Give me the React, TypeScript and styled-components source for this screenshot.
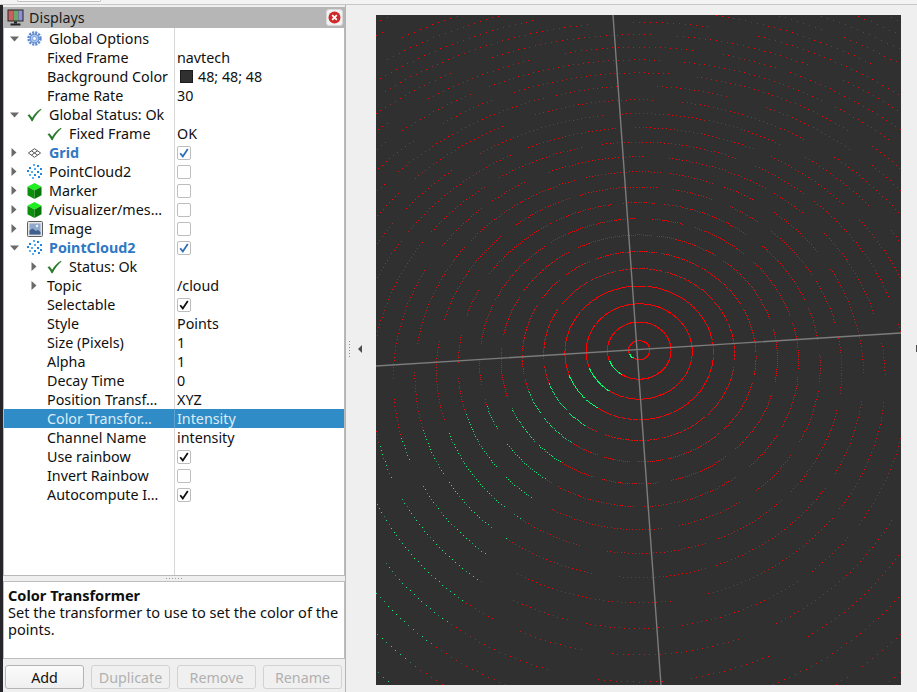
import React from "react";
import styled, { createGlobalStyle } from "styled-components";

const GlobalStyle = createGlobalStyle`
  html, body {
    margin: 0;
    padding: 0;
    background: #efefef;
    overflow: hidden;
  }
  * { box-sizing: border-box; }
`;

const Page = styled.div`
  width: 917px;
  height: 692px;
  display: flex;
  flex-direction: column;
  overflow: hidden;
  background: #efefef;
  color: #101010;
  font-family: "Noto Sans", "Open Sans", sans-serif;
  font-size: 14.3px;
`;

const TopStrip = styled.div`
  height: 5px;
  flex: none;
  background: #f3f3f3;
  border-bottom: 1px solid #c6c6c6;
  padding-left: 17px;
`;

const TopButton = styled.div`
  width: 84px;
  height: 2px;
  background: #fafafa;
  border: 1px solid #c0c0c0;
  border-top: none;
  border-radius: 0 0 3px 3px;
`;

const Main = styled.div`
  flex: 1;
  display: flex;
  min-height: 0;
`;

const LeftEdge = styled.div`
  width: 3px;
  flex: none;
  background: #26262a;
`;

const Sidebar = styled.div`
  width: 342px;
  flex: none;
  display: flex;
  flex-direction: column;
  padding-top: 2px;
`;

const TitleBar = styled.div`
  height: 21px;
  flex: none;
  display: flex;
  align-items: center;
  background: #b6b6b6;
  padding: 0 2px 0 4px;
`;

const TitleText = styled.span`
  margin-left: 5px;
  flex: 1;
  color: #1a1a1a;
`;

const CloseButton = styled.div`
  width: 17px;
  height: 17px;
  background: #f2f2f2;
  border: 1px solid #d8d8d8;
  border-radius: 3px;
  display: flex;
  align-items: center;
  justify-content: center;
`;

const Tree = styled.div`
  flex: 1;
  min-height: 0;
  border: 1px solid #b9b9b9;
  border-top: none;
  padding-top: 1px;
  background: linear-gradient(#d6d6d6, #d6d6d6) 170px 0 / 1px 100% no-repeat, #ffffff;
`;

const Row = styled.div<{ $selected?: boolean }>`
  height: 19px;
  display: flex;
  align-items: center;
  background: ${(p) => (p.$selected ? "#308cc6" : "transparent")};
  color: ${(p) => (p.$selected ? "#dcebf6" : "#101010")};
`;

const NameCell = styled.div<{ $depth: number; $selected?: boolean }>`
  width: 171px;
  height: 100%;
  flex: none;
  display: flex;
  align-items: center;
  padding-left: ${(p) => p.$depth * 20}px;
  border-right: 1px solid ${(p) => (p.$selected ? "#5aa3d2" : "transparent")};
  white-space: nowrap;
  overflow: hidden;
`;

const ArrowSlot = styled.div`
  width: 20px;
  flex: none;
  display: flex;
  justify-content: center;
`;

const IconSlot = styled.div`
  width: 21px;
  flex: none;
  display: flex;
  justify-content: center;
  align-items: center;
`;

const NameText = styled.span<{ $bold?: boolean; $plain?: boolean }>`
  margin-left: ${(p) => (p.$plain ? 3 : 4)}px;
  font-weight: ${(p) => (p.$bold ? 700 : 400)};
  color: ${(p) => (p.$bold ? "#2f78c4" : "inherit")};
`;

const ValueCell = styled.div`
  flex: 1;
  display: flex;
  align-items: center;
  padding-left: 2px;
  white-space: nowrap;
`;

const Swatch = styled.span`
  width: 13px;
  height: 13px;
  margin: 0 5px 0 3px;
  background: #303030;
  border: 1px solid #1c1c1c;
`;

const CheckBox = styled.span`
  width: 14px;
  height: 14px;
  background: #fff;
  border: 1px solid #bdbdbd;
  border-radius: 2px;
  display: flex;
  align-items: center;
  justify-content: center;
`;

const SplitGrip = styled.div`
  height: 5px;
  flex: none;
  display: flex;
  justify-content: center;
  align-items: center;
  gap: 2px;
`;

const GripDot = styled.span`
  width: 1px;
  height: 1px;
  background: #9a9a9a;
`;

const Description = styled.div`
  height: 78px;
  flex: none;
  background: #fff;
  border: 1px solid #bdbdbd;
  padding: 5px 4px;
  font-size: 14.55px;
  line-height: 17px;
`;

const DescTitle = styled.div`
  font-weight: 700;
`;

const ButtonRow = styled.div`
  display: flex;
  gap: 7px;
  padding: 6px 2px 3px 2px;
`;

const ActionButton = styled.button<{ $disabled?: boolean }>`
  width: 79px;
  height: 24px;
  padding: 0;
  font: inherit;
  border-radius: 3px;
  border: 1px solid ${(p) => (p.$disabled ? "#d2d2d2" : "#b4b4b4")};
  color: ${(p) => (p.$disabled ? "#b0b0b0" : "#101010")};
  background: ${(p) =>
    p.$disabled ? "#f0f0f0" : "linear-gradient(#fbfbfb, #efefef)"};
`;

const Handle = styled.div`
  width: 31px;
  flex: none;
  display: flex;
  align-items: center;
  gap: 8px;
  padding-left: 3px;
  border-left: 1px solid #b4b4b4;
`;

const HandleDots = styled.div`
  display: flex;
  flex-direction: column;
  gap: 2px;
`;

const HandleDot = styled.span`
  width: 1px;
  height: 1px;
  background: #8d8d8d;
`;

const LeftArrow = styled.span`
  width: 0;
  height: 0;
  border-style: solid;
  border-width: 4px 4px 4px 0;
  border-color: transparent #4c4c4c transparent transparent;
`;

const ViewportWrap = styled.div`
  width: 525px;
  height: 670px;
  flex: none;
  margin-top: 10px;
  background: #303030;
`;

const RightGap = styled.div`
  flex: 1;
  display: flex;
  justify-content: flex-end;
  align-items: center;
`;

const RightMark = styled.span`
  width: 1px;
  height: 7px;
  background: #4c4c4c;
`;

// tree arrows and item icons

const TreeArrow = ({ open }: { open: boolean }) =>
  open ? (
    <svg width="9" height="6" viewBox="0 0 9 6">
      <path d="M0 .5h9L4.5 5.5z" fill="#6a6a6a" />
    </svg>
  ) : (
    <svg width="6" height="9" viewBox="0 0 6 9">
      <path d="M.5 0v9l5-4.5z" fill="#6a6a6a" />
    </svg>
  );

const CheckIcon = () => (
  <svg width="15" height="14" viewBox="0 0 15 14">
    <path d="M0.5 7.2 2.4 6.200 5.200 9.800C7.400 6 10 3 14 .8l.5.7C10.800 4.600 8 8.600 5.600 13.200H4.600C3.400 10.800 2 9 .5 7.200z" fill="#2c7a2c" />
  </svg>
);

const GearIcon = () => (
  <svg width="15" height="15" viewBox="0 0 15 15">
    <circle cx="7.5" cy="7.5" r="6" fill="none" stroke="#5c88d0" strokeWidth="2.4" strokeDasharray="2.1 1.04" />
    <circle cx="7.5" cy="7.5" r="4.4" fill="#a9c5ee" stroke="#4f7cc8" strokeWidth="1" />
    <circle cx="7.5" cy="7.5" r="2" fill="#f4f8fe" stroke="#6f97d8" strokeWidth=".8" />
  </svg>
);

const GridIcon = () => (
  <svg width="15" height="10" viewBox="0 0 15 10">
    <path d="M7.5.7 13.6 5 7.5 9.3 1.4 5zM4.5 2.8l6 4.3M10.5 2.8l-6 4.3" fill="none" stroke="#5a5a5a" strokeWidth="1" />
  </svg>
);

const CLOUD_DOTS = [
  [6, 0], [10, 1], [2, 3], [7, 4], [13, 4], [0, 6], [4, 7], [10, 7],
  [13, 9], [2, 10], [7, 10], [11, 12], [5, 13],
];

const CloudIcon = () => (
  <svg width="15" height="15" viewBox="0 0 15 15">
    {CLOUD_DOTS.map(([x, y], i) => (
      <rect key={i} x={x} y={y} width="2" height="2" fill={i % 3 === 0 ? "#5ab0ee" : "#1f86e2"} />
    ))}
  </svg>
);

const CubeIcon = () => (
  <svg width="15" height="16" viewBox="0 0 15 16">
    <path d="M7.5 0 14.5 3.8 7.5 7.6.5 3.8z" fill="#1df01d" />
    <path d="M.5 3.8 7.5 7.6V16L.5 12.2z" fill="#0a8f0a" />
    <path d="M14.5 3.8 7.5 7.6V16l7-3.8z" fill="#067406" />
  </svg>
);

const ImageIcon = () => (
  <svg width="16" height="16" viewBox="0 0 16 16">
    <rect x=".5" y=".5" width="15" height="15" rx="1" fill="#e6e6e6" stroke="#5f5f5f" />
    <rect x="2.5" y="2.5" width="11" height="11" fill="#8fa8cc" />
    <path d="M2.5 13.5V9.5l3-2 3.5 2.500 2-1 2.500 2v2.500z" fill="#3f5f8c" />
    <circle cx="10" cy="5" r="1.300" fill="#e8eef8" />
  </svg>
);

const MonitorIcon = () => (
  <svg width="17" height="17" viewBox="0 0 17 17">
    <rect x=".5" y=".5" width="16" height="12" fill="#222" />
    <rect x="1.500" y="1.500" width="5" height="10" fill="#c9605f" />
    <rect x="6.500" y="1.500" width="5" height="10" fill="#6ba86b" />
    <rect x="11.500" y="1.500" width="4" height="10" fill="#8f8fd8" />
    <rect x="7" y="12.500" width="3" height="2" fill="#222" />
    <rect x="3.500" y="14.500" width="10" height="2" fill="#222" />
  </svg>
);

const CloseIcon = () => (
  <svg width="13" height="13" viewBox="0 0 13 13">
    <circle cx="6.500" cy="6.500" r="6" fill="#cf2a2a" />
    <path d="M4.200 4.200l4.600 4.600M8.800 4.200l-4.600 4.600" stroke="#fff" strokeWidth="1.800" />
  </svg>
);

const BoxTick = ({ color }: { color: string }) => (
  <svg width="10" height="10" viewBox="0 0 10 10">
    <path d="M1.200 5.200 3.800 8.400 8.800 1" fill="none" stroke={color} strokeWidth="1.800" />
  </svg>
);

type IconKind = "gear" | "check" | "grid" | "cloud" | "cube" | "image";

const ICONS: Record<IconKind, React.ReactNode> = {
  gear: <GearIcon />,
  check: <CheckIcon />,
  grid: <GridIcon />,
  cloud: <CloudIcon />,
  cube: <CubeIcon />,
  image: <ImageIcon />,
};

interface TreeRow {
  name: string;
  depth?: number;
  arrow?: "open" | "closed";
  icon?: IconKind;
  bold?: boolean;
  selected?: boolean;
  value?: string;
  swatch?: boolean;
  box?: "off" | "on" | "blue";
}

const ROWS: TreeRow[] = [
  { name: "Global Options", arrow: "open", icon: "gear" },
  { name: "Fixed Frame", depth: 1, value: "navtech" },
  { name: "Background Color", depth: 1, value: "48; 48; 48", swatch: true },
  { name: "Frame Rate", depth: 1, value: "30" },
  { name: "Global Status: Ok", arrow: "open", icon: "check" },
  { name: "Fixed Frame", depth: 1, icon: "check", value: "OK" },
  { name: "Grid", arrow: "closed", icon: "grid", bold: true, box: "blue" },
  { name: "PointCloud2", arrow: "closed", icon: "cloud", box: "off" },
  { name: "Marker", arrow: "closed", icon: "cube", box: "off" },
  { name: "/visualizer/mes…", arrow: "closed", icon: "cube", box: "off" },
  { name: "Image", arrow: "closed", icon: "image", box: "off" },
  { name: "PointCloud2", arrow: "open", icon: "cloud", bold: true, box: "blue" },
  { name: "Status: Ok", depth: 1, arrow: "closed", icon: "check" },
  { name: "Topic", depth: 1, arrow: "closed", value: "/cloud" },
  { name: "Selectable", depth: 1, box: "on" },
  { name: "Style", depth: 1, value: "Points" },
  { name: "Size (Pixels)", depth: 1, value: "1" },
  { name: "Alpha", depth: 1, value: "1" },
  { name: "Decay Time", depth: 1, value: "0" },
  { name: "Position Transf…", depth: 1, value: "XYZ" },
  { name: "Color Transfor…", depth: 1, value: "Intensity", selected: true },
  { name: "Channel Name", depth: 1, value: "intensity" },
  { name: "Use rainbow", depth: 1, box: "on" },
  { name: "Invert Rainbow", depth: 1, box: "off" },
  { name: "Autocompute I…", depth: 1, box: "on" },
];

// radar point cloud: rings on the ground plane, seen in perspective

function makeRandom(seed: number) {
  let s = seed;
  return () => {
    s = (s + 0x6d2b79f5) | 0;
    let t = Math.imul(s ^ (s >>> 15), 1 | s);
    t = (t + Math.imul(t ^ (t >>> 7), 61 | t)) ^ t;
    return ((t ^ (t >>> 14)) >>> 0) / 4294967296;
  };
}

const CX = 638.7;
const CY = 349.6;
const REDS = ["#ff0000", "#e01010", "#bc1c1c", "#963030"];
const GREENS = ["#00ff70", "#14e088", "#22b078", "#2c8a60"];
const STEPS = 400;

function buildCloud() {
  const rnd = makeRandom(20240);
  const paths: Record<string, string> = {};
  for (let k = 0; k < 42; k++) {
    const r = k + 0.5;
    let i = Math.floor(rnd() * 20);
    let run = 0;
    let on = true;
    for (let n = 0; n < STEPS; n++) {
      if (run <= 0) {
        on = !on;
        if (on) {
          run = (k < 4 ? 70 : 10) + rnd() * (k < 4 ? 120 : 30);
        } else {
          run = k < 4 ? 1 + rnd() : 1 + rnd() * Math.min(7, 2 + k / 2);
        }
      }
      run--;
      i++;
      if (!on) continue;
      const a = (i / STEPS) * Math.PI * 2;
      const X = r * Math.cos(a);
      const Y = r * Math.sin(a);
      const d = 0.0525 - 0.000608 * Y;
      const px = Math.round(CX + (X * 1.113) / d);
      const py = Math.round(CY + Y / d);
      if (px < 376 || px >= 901 || py < 15 || py >= 685) continue;
      const dx = px - CX;
      const dy = py - CY;
      const ratio = dy / Math.max(0.01, -dx);
      const green = dx < 0 && dy > 0 && ratio > 0.36 && ratio < 1.42;
      const roll = rnd();
      const level = k < 4 ? 0 : roll < 0.4 ? 0 : roll < 0.7 ? 1 : roll < 0.9 ? 2 : 3;
      const fill = (green ? GREENS : REDS)[level];
      paths[fill] = (paths[fill] || "") + `M${px} ${py}h1v1h-1z`;
    }
  }
  return paths;
}

const CLOUD = buildCloud();

const PointCloudView = () => (
  <svg width="525" height="670" viewBox="376 15 525 670" style={{ display: "block" }}>
    {Object.keys(CLOUD).map((fill) => (
      <path key={fill} d={CLOUD[fill]} fill={fill} shapeRendering="crispEdges" />
    ))}
    <path d="M613 15 661 685M376 366 901 333" stroke="#7c7c7c" strokeWidth="1.400" fill="none" />
  </svg>
);

const TreeLine = ({ row }: { row: TreeRow }) => {
  const { name, depth = 0, arrow, icon, bold, selected, value, swatch, box } = row;
  return (
    <Row $selected={selected}>
      <NameCell $depth={depth} $selected={selected}>
        <ArrowSlot>{arrow && <TreeArrow open={arrow === "open"} />}</ArrowSlot>
        {icon && <IconSlot>{ICONS[icon]}</IconSlot>}
        <NameText $bold={bold} $plain={!icon}>{name}</NameText>
      </NameCell>
      <ValueCell>
        {swatch && <Swatch />}
        {value}
        {box && (
          <CheckBox>
            {box !== "off" && <BoxTick color={box === "blue" ? "#2f6fb4" : "#111"} />}
          </CheckBox>
        )}
      </ValueCell>
    </Row>
  );
};

export default function App() {
  return (
    <Page>
      <GlobalStyle />
      <TopStrip>
        <TopButton />
      </TopStrip>
      <Main>
        <LeftEdge />
        <Sidebar>
          <TitleBar>
            <MonitorIcon />
            <TitleText>Displays</TitleText>
            <CloseButton>
              <CloseIcon />
            </CloseButton>
          </TitleBar>
          <Tree>
            {ROWS.map((row, i) => (
              <TreeLine key={i} row={row} />
            ))}
          </Tree>
          <SplitGrip>
            {[0, 1, 2, 3, 4, 5].map((i) => (
              <GripDot key={i} />
            ))}
          </SplitGrip>
          <Description>
            <DescTitle>Color Transformer</DescTitle>
            <div>Set the transformer to use to set the color of the points.</div>
          </Description>
          <ButtonRow>
            <ActionButton>Add</ActionButton>
            <ActionButton $disabled>Duplicate</ActionButton>
            <ActionButton $disabled>Remove</ActionButton>
            <ActionButton $disabled>Rename</ActionButton>
          </ButtonRow>
        </Sidebar>
        <Handle>
          <HandleDots>
            {[0, 1, 2, 3, 4, 5].map((i) => (
              <HandleDot key={i} />
            ))}
          </HandleDots>
          <LeftArrow />
        </Handle>
        <ViewportWrap>
          <PointCloudView />
        </ViewportWrap>
        <RightGap>
          <RightMark />
        </RightGap>
      </Main>
    </Page>
  );
}
